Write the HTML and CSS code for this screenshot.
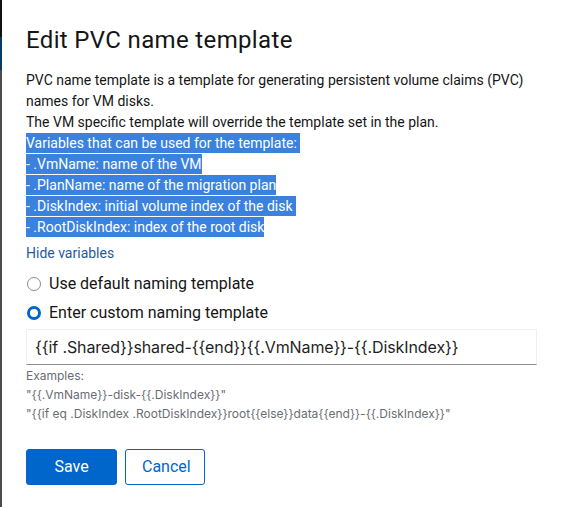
FILE: index.html
```html
<!DOCTYPE html>
<html lang="en">
<head>
<meta charset="utf-8">
<title>Edit PVC name template</title>
<link rel="stylesheet" href="styles.css">
</head>
<body>
<div class="backdrop">
  <div class="page-edge">
    <div class="edge-masthead"></div>
    <div class="edge-nav"></div>
    <div class="edge-rest"></div>
  </div>
  <div class="modal" role="dialog" aria-labelledby="modal-title">
    <h1 class="modal-title" id="modal-title">Edit PVC name template</h1>
    <div class="modal-body">
      <p class="description">PVC name template is a template for generating persistent volume claims (PVC) names for VM disks.<br>The VM specific template will override the template set in the plan.</p>
      <div class="variables">
        <div class="hl hl-trail">Variables that can be used for the template:</div>
        <div class="hl">- .VmName: name of the VM</div>
        <div class="hl">- .PlanName: name of the migration plan</div>
        <div class="hl hl-trail">- .DiskIndex: initial volume index of the disk</div>
        <div class="hl">- .RootDiskIndex: index of the root disk</div>
      </div>
      <button class="link-btn" type="button">Hide variables</button>
      <div class="radio-group">
        <label class="radio">
          <span class="radio-input"></span>
          <span class="radio-label">Use default naming template</span>
        </label>
        <label class="radio">
          <span class="radio-input checked"></span>
          <span class="radio-label">Enter custom naming template</span>
        </label>
      </div>
      <div class="text-input">{{if .Shared}}shared-{{end}}{{.VmName}}-{{.DiskIndex}}</div>
      <div class="helper">
        <div>Examples:</div>
        <div>"{{.VmName}}-disk-{{.DiskIndex}}"</div>
        <div>"{{if eq .DiskIndex .RootDiskIndex}}root{{else}}data{{end}}-{{.DiskIndex}}"</div>
      </div>
    </div>
    <div class="modal-footer">
      <button class="btn btn-primary" type="button">Save</button>
      <button class="btn btn-secondary" type="button">Cancel</button>
    </div>
  </div>
</div>
</body>
</html>
```
FILE: styles.css
```css
* { box-sizing: border-box; }

html, body {
  margin: 0;
  padding: 0;
  height: 100%;
  background: #ffffff;
}

body {
  font-family: Roboto, "Liberation Sans", sans-serif;
  color: #151515;
  overflow: hidden;
}

.backdrop {
  display: flex;
  height: 507px;
}

.page-edge {
  width: 2px;
  display: flex;
  flex-direction: column;
  flex: none;
}

.edge-masthead { height: 37px; background: #111111; }
.edge-nav { height: 33px; background: #0b3a68; }
.edge-rest { flex: 1; background: #4c4c4c; }

.modal {
  flex: 1;
  background: #ffffff;
  padding: 25px 24px 0 24px;
}

.modal-title {
  margin: 0 0 14px 0;
  font-family: Roboto, "Liberation Sans", sans-serif;
  font-weight: 400;
  font-size: 24px;
  letter-spacing: 0.35px;
  line-height: 31px;
  color: #151515;
}

.modal-body {
  font-size: 14px;
  line-height: 21px;
}

.description {
  margin: 0;
}

.variables {
  display: flex;
  flex-direction: column;
  align-items: flex-start;
}

.hl {
  background: #3b82df;
  color: #ffffff;
  line-height: 20px;
  height: 20px;
  margin-bottom: 1px;
}

.hl-trail { padding-right: 3px; }

.link-btn {
  display: block;
  margin: 5px 0 0 0;
  padding: 0;
  border: 0;
  background: none;
  font-family: Roboto, "Liberation Sans", sans-serif;
  font-size: 14px;
  line-height: 21px;
  color: #1f5c9c;
  cursor: pointer;
}

.radio-group {
  display: flex;
  flex-direction: column;
  gap: 5px;
  margin-top: 8px;
}

.radio {
  display: flex;
  align-items: center;
  gap: 8px;
  height: 24px;
  font-size: 16px;
  line-height: 24px;
  padding-left: 1px;
}

.radio-input {
  width: 14px;
  height: 14px;
  border-radius: 50%;
  border: 1px solid #8a8d90;
  background: #ffffff;
  flex: none;
}

.radio-input.checked {
  border: 3px solid #0066cc;
}

.text-input {
  margin-top: 4px;
  height: 36px;
  border: 1px solid #f0f0f0;
  border-bottom-color: #8a8d90;
  padding: 0 8px;
  font-family: Inter, "Noto Sans", sans-serif;
  font-size: 16px;
  letter-spacing: -0.1px;
  line-height: 34px;
  color: #1f1f1f;
  white-space: nowrap;
}

.helper {
  margin-top: 1px;
  font-family: Inter, "Noto Sans", sans-serif;
  font-size: 12px;
  line-height: 19px;
  color: #6a6e73;
}

.modal-footer {
  display: flex;
  gap: 8px;
  margin-top: 26px;
}

.btn {
  height: 36px;
  border-radius: 3px;
  font-family: Roboto, "Liberation Sans", sans-serif;
  font-size: 16px;
  line-height: 24px;
  padding: 0 16px;
  cursor: pointer;
}

.btn-primary {
  width: 91px;
  background: #0066cc;
  border: 1px solid #0066cc;
  color: #ffffff;
}

.btn-secondary {
  width: 80px;
  background: #ffffff;
  border: 1px solid #0066cc;
  color: #0066cc;
}
```
